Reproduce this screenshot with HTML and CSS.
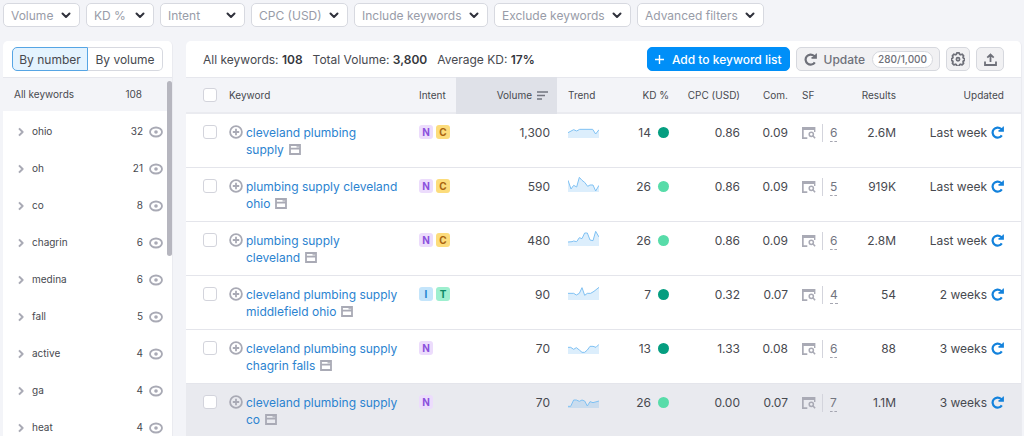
FILE: index.html
```html
<!DOCTYPE html>
<html lang="en">
<head>
<meta charset="utf-8">
<meta name="viewport" content="width=device-width, initial-scale=1">
<title>Keyword overview</title>
<link rel="stylesheet" href="styles.css">
</head>
<body>
<svg class="sprite" aria-hidden="true">
  <symbol id="chevron-down" viewBox="0 0 10 7"><path d="M1.5 1.5 5 5 8.5 1.5" fill="none" stroke="currentColor" stroke-width="2" stroke-linecap="round" stroke-linejoin="round"/></symbol>
  <symbol id="chevron-right" viewBox="0 0 6 10"><path d="M1 1.4 4.600 5 1 8.600" fill="none" stroke="currentColor" stroke-width="2" stroke-linejoin="round"/></symbol>
  <symbol id="eye" viewBox="0 0 14 12"><ellipse cx="7" cy="6" rx="6" ry="4.5" fill="none" stroke="currentColor" stroke-width="1.8"/><circle cx="7" cy="6" r="1.8" fill="currentColor"/></symbol>
  <symbol id="plus-circle" viewBox="0 0 14 14"><circle cx="7" cy="7" r="5.9" fill="none" stroke="currentColor" stroke-width="1.8"/><path d="M7 3.8v6.4M3.8 7h6.4" stroke="currentColor" stroke-width="1.8"/></symbol>
  <symbol id="page" viewBox="0 0 12 11"><path d="M1 1h10v9H1zM1 4.700h10" fill="none" stroke="currentColor" stroke-width="1.8"/><path d="M7.500 2.800h2.500" stroke="currentColor" stroke-width="1.200"/></symbol>
  <symbol id="serp" viewBox="0 0 14 12"><path d="M0 0h13.400v5H12V3H1.700v7.300h3.600V12H0z" fill="currentColor"/><circle cx="9.300" cy="7.300" r="2.100" fill="none" stroke="currentColor" stroke-width="1.500"/><path d="m10.800 8.800 2.300 2.400" stroke="currentColor" stroke-width="1.600"/></symbol>
  <symbol id="refresh" viewBox="0 0 13 13"><path d="M10.800 9.300A5 5 0 1 1 10 2.900L11 4" fill="none" stroke="currentColor" stroke-width="2.200"/><path d="M12.900.4v5.400H7.500V4.100h2.200L12 .4z" fill="currentColor"/></symbol>
</svg>

<form class="filters">
  <label class="filter filter-volume"><select aria-label="Volume"><option>Volume</option></select><svg class="chevron"><use href="#chevron-down"/></svg></label>
  <label class="filter filter-kd"><select aria-label="KD %"><option>KD %</option></select><svg class="chevron"><use href="#chevron-down"/></svg></label>
  <label class="filter filter-intent"><select aria-label="Intent"><option>Intent</option></select><svg class="chevron"><use href="#chevron-down"/></svg></label>
  <label class="filter filter-cpc"><select aria-label="CPC (USD)"><option>CPC (USD)</option></select><svg class="chevron"><use href="#chevron-down"/></svg></label>
  <label class="filter filter-include"><select aria-label="Include keywords"><option>Include keywords</option></select><svg class="chevron"><use href="#chevron-down"/></svg></label>
  <label class="filter filter-exclude"><select aria-label="Exclude keywords"><option>Exclude keywords</option></select><svg class="chevron"><use href="#chevron-down"/></svg></label>
  <label class="filter filter-advanced"><select aria-label="Advanced filters"><option>Advanced filters</option></select><svg class="chevron"><use href="#chevron-down"/></svg></label>
</form>

<div class="layout">
  <aside class="sidebar">
    <div class="tabs">
      <button type="button" class="tab tab-active" aria-pressed="true">By number</button>
      <button type="button" class="tab" aria-pressed="false">By volume</button>
    </div>
    <div class="groups">
      <div class="groups-head"><span>All keywords</span><span class="group-count">108</span></div>
      <ul class="group-list">
        <li class="group"><svg class="arrow"><use href="#chevron-right"/></svg><span>ohio</span><span class="group-count">32</span><button type="button" class="icon-button" aria-label="Hide ohio"><svg class="eye"><use href="#eye"/></svg></button></li>
        <li class="group"><svg class="arrow"><use href="#chevron-right"/></svg><span>oh</span><span class="group-count">21</span><button type="button" class="icon-button" aria-label="Hide oh"><svg class="eye"><use href="#eye"/></svg></button></li>
        <li class="group"><svg class="arrow"><use href="#chevron-right"/></svg><span>co</span><span class="group-count">8</span><button type="button" class="icon-button" aria-label="Hide co"><svg class="eye"><use href="#eye"/></svg></button></li>
        <li class="group"><svg class="arrow"><use href="#chevron-right"/></svg><span>chagrin</span><span class="group-count">6</span><button type="button" class="icon-button" aria-label="Hide chagrin"><svg class="eye"><use href="#eye"/></svg></button></li>
        <li class="group"><svg class="arrow"><use href="#chevron-right"/></svg><span>medina</span><span class="group-count">6</span><button type="button" class="icon-button" aria-label="Hide medina"><svg class="eye"><use href="#eye"/></svg></button></li>
        <li class="group"><svg class="arrow"><use href="#chevron-right"/></svg><span>fall</span><span class="group-count">5</span><button type="button" class="icon-button" aria-label="Hide fall"><svg class="eye"><use href="#eye"/></svg></button></li>
        <li class="group"><svg class="arrow"><use href="#chevron-right"/></svg><span>active</span><span class="group-count">4</span><button type="button" class="icon-button" aria-label="Hide active"><svg class="eye"><use href="#eye"/></svg></button></li>
        <li class="group"><svg class="arrow"><use href="#chevron-right"/></svg><span>ga</span><span class="group-count">4</span><button type="button" class="icon-button" aria-label="Hide ga"><svg class="eye"><use href="#eye"/></svg></button></li>
        <li class="group"><svg class="arrow"><use href="#chevron-right"/></svg><span>heat</span><span class="group-count">4</span><button type="button" class="icon-button" aria-label="Hide heat"><svg class="eye"><use href="#eye"/></svg></button></li>
      </ul>
      <div class="scroll-thumb"></div>
    </div>
  </aside>

  <main class="panel">
    <div class="toolbar">
      <span>All keywords: <b>108</b></span>
      <span>Total Volume: <b>3,800</b></span>
      <span>Average KD: <b>17%</b></span>
      <div class="actions">
        <button type="button" class="button button-primary"><svg class="plus" viewBox="0 0 9 9"><path d="M4.5 0v9M0 4.5h9" stroke="currentColor" stroke-width="1.4"/></svg>Add to keyword list</button>
        <button type="button" class="button button-update"><svg class="refresh"><use href="#refresh"/></svg>Update<span class="quota">280/1,000</span></button>
        <button type="button" class="button button-gear" aria-label="Settings"><svg class="gear" viewBox="0 0 14 14" fill="none" stroke="currentColor"><path d="M5.8.9h2.4l.5 1.5 1 .4 1.4-.6 1.5 1.6-.6 1.4.4 1 1.3.4v1.8l-1.3.5-.4 1 .6 1.4-1.5 1.6-1.4-.7-1 .4-.5 1.4H5.800l-.5-1.400-1-.4-1.400.7-1.500-1.600.6-1.400-.4-1L.3 8.400V6.600l1.300-.4.400-1-.6-1.400 1.500-1.600 1.400.6 1-.4z" stroke-width="1.700" stroke-linejoin="round"/><circle cx="7" cy="7.200" r="1.600" stroke-width="1.700"/></svg></button>
        <button type="button" class="button button-export" aria-label="Export"><svg class="export" viewBox="0 0 13 13" fill="none" stroke="currentColor" stroke-width="1.800"><path d="M6.500 9V1.600M3.300 4.600l3.200-3.200 3.200 3.200M1 8.500V12h11V8.500"/></svg></button>
      </div>
    </div>

    <table class="keywords">
      <colgroup>
        <col class="col-check"><col><col class="col-intent"><col class="col-volume"><col class="col-trend"><col class="col-kd"><col class="col-cpc"><col class="col-com"><col class="col-sf"><col class="col-results"><col class="col-updated">
      </colgroup>
      <thead>
        <tr>
          <th class="check"><input type="checkbox" aria-label="Select all"></th>
          <th>Keyword</th>
          <th>Intent</th>
          <th class="num volume sorted"><span class="sort">Volume<svg class="sort-icon" viewBox="0 0 11 9"><path d="M0 1h11M0 4.500h8M0 8h5" stroke="currentColor" stroke-width="1.500"/></svg></span></th>
          <th class="trend">Trend</th>
          <th class="num">KD %</th>
          <th class="num">CPC (USD)</th>
          <th class="num">Com.</th>
          <th class="sf">SF</th>
          <th class="num">Results</th>
          <th class="num updated">Updated</th>
        </tr>
      </thead>
      <tbody>
        <tr>
          <td class="check"><input type="checkbox" aria-label="Select cleveland plumbing supply"></td>
          <td><div class="keyword"><svg class="add"><use href="#plus-circle"/></svg><span><a href="#">cleveland plumbing</a> <span class="tail"><a href="#">supply</a><svg class="page"><use href="#page"/></svg></span></span></div></td>
          <td><div class="intents"><span class="intent intent-n">N</span><span class="intent intent-c">C</span></div></td>
          <td class="num volume">1,300</td>
          <td class="trend"><svg class="spark" viewBox="0 0 93 48"><path class="area" d="M0 32 17 23 26 27 35 22H74L83 36 93 23V48H0z"/><path class="line" d="M0 32 17 23 26 27 35 22H74L83 36 93 23"/></svg></td>
          <td><div class="kd">14<i class="dot dot-easy"></i></div></td>
          <td class="num">0.86</td><td class="num">0.09</td>
          <td class="sf"><div class="serp"><svg class="serp-icon"><use href="#serp"/></svg><span class="serp-count"><span>6</span></span></div></td>
          <td class="num">2.6M</td>
          <td class="updated"><div class="fresh">Last week<button type="button" class="icon-button" aria-label="Refresh"><svg class="refresh"><use href="#refresh"/></svg></button></div></td>
        </tr>
        <tr>
          <td class="check"><input type="checkbox" aria-label="Select plumbing supply cleveland ohio"></td>
          <td><div class="keyword"><svg class="add"><use href="#plus-circle"/></svg><span><a href="#">plumbing supply cleveland</a> <span class="tail"><a href="#">ohio</a><svg class="page"><use href="#page"/></svg></span></span></div></td>
          <td><div class="intents"><span class="intent intent-n">N</span><span class="intent intent-c">C</span></div></td>
          <td class="num volume">590</td>
          <td class="trend"><svg class="spark" viewBox="0 0 93 48"><path class="area" d="M0 13 9 39 17 28 26 33 34 4 42 13 50 19 59 31 66 27H75L83 45 93 28V48H0z"/><path class="line" d="M0 13 9 39 17 28 26 33 34 4 42 13 50 19 59 31 66 27H75L83 45 93 28"/></svg></td>
          <td><div class="kd">26<i class="dot dot-fair"></i></div></td>
          <td class="num">0.86</td><td class="num">0.09</td>
          <td class="sf"><div class="serp"><svg class="serp-icon"><use href="#serp"/></svg><span class="serp-count"><span>5</span></span></div></td>
          <td class="num">919K</td>
          <td class="updated"><div class="fresh">Last week<button type="button" class="icon-button" aria-label="Refresh"><svg class="refresh"><use href="#refresh"/></svg></button></div></td>
        </tr>
        <tr>
          <td class="check"><input type="checkbox" aria-label="Select plumbing supply cleveland"></td>
          <td><div class="keyword"><svg class="add"><use href="#plus-circle"/></svg><span><a href="#">plumbing supply</a> <span class="tail"><a href="#">cleveland</a><svg class="page"><use href="#page"/></svg></span></span></div></td>
          <td><div class="intents"><span class="intent intent-n">N</span><span class="intent intent-c">C</span></div></td>
          <td class="num volume">480</td>
          <td class="trend"><svg class="spark" viewBox="0 0 93 48"><path class="area" d="M0 36 12 35 17 33 26 35 34 23 42 26 50 9H58L66 30 75 32 83 4 93 21V48H0z"/><path class="line" d="M0 36 12 35 17 33 26 35 34 23 42 26 50 9H58L66 30 75 32 83 4 93 21"/></svg></td>
          <td><div class="kd">26<i class="dot dot-fair"></i></div></td>
          <td class="num">0.86</td><td class="num">0.09</td>
          <td class="sf"><div class="serp"><svg class="serp-icon"><use href="#serp"/></svg><span class="serp-count"><span>6</span></span></div></td>
          <td class="num">2.8M</td>
          <td class="updated"><div class="fresh">Last week<button type="button" class="icon-button" aria-label="Refresh"><svg class="refresh"><use href="#refresh"/></svg></button></div></td>
        </tr>
        <tr>
          <td class="check"><input type="checkbox" aria-label="Select cleveland plumbing supply middlefield ohio"></td>
          <td><div class="keyword"><svg class="add"><use href="#plus-circle"/></svg><span><a href="#">cleveland plumbing supply middlefield ohio</a><svg class="page"><use href="#page"/></svg></span></div></td>
          <td><div class="intents"><span class="intent intent-i">I</span><span class="intent intent-t">T</span></div></td>
          <td class="num volume">90</td>
          <td class="trend"><svg class="spark" viewBox="0 0 93 48"><path class="area" d="M0 28H17L25 33 34 28 42 11 50 34 58 28H68L78 22 93 10V48H0z"/><path class="line" d="M0 28H17L25 33 34 28 42 11 50 34 58 28H68L78 22 93 10"/></svg></td>
          <td><div class="kd">7<i class="dot dot-easy"></i></div></td>
          <td class="num">0.32</td><td class="num">0.07</td>
          <td class="sf"><div class="serp"><svg class="serp-icon"><use href="#serp"/></svg><span class="serp-count"><span>4</span></span></div></td>
          <td class="num">54</td>
          <td class="updated"><div class="fresh">2 weeks<button type="button" class="icon-button" aria-label="Refresh"><svg class="refresh"><use href="#refresh"/></svg></button></div></td>
        </tr>
        <tr>
          <td class="check"><input type="checkbox" aria-label="Select cleveland plumbing supply chagrin falls"></td>
          <td><div class="keyword"><svg class="add"><use href="#plus-circle"/></svg><span><a href="#">cleveland plumbing supply chagrin falls</a><svg class="page"><use href="#page"/></svg></span></div></td>
          <td><div class="intents"><span class="intent intent-n">N</span></div></td>
          <td class="num volume">70</td>
          <td class="trend"><svg class="spark" viewBox="0 0 93 48"><path class="area" d="M0 28H8L17 34 25 29 34 36 42 43H50L58 36 66 25H75L84 28 93 19V48H0z"/><path class="line" d="M0 28H8L17 34 25 29 34 36 42 43H50L58 36 66 25H75L84 28 93 19"/></svg></td>
          <td><div class="kd">13<i class="dot dot-easy"></i></div></td>
          <td class="num">1.33</td><td class="num">0.08</td>
          <td class="sf"><div class="serp"><svg class="serp-icon"><use href="#serp"/></svg><span class="serp-count"><span>6</span></span></div></td>
          <td class="num">88</td>
          <td class="updated"><div class="fresh">3 weeks<button type="button" class="icon-button" aria-label="Refresh"><svg class="refresh"><use href="#refresh"/></svg></button></div></td>
        </tr>
        <tr class="row-hover">
          <td class="check"><input type="checkbox" aria-label="Select cleveland plumbing supply co"></td>
          <td><div class="keyword"><svg class="add"><use href="#plus-circle"/></svg><span><a href="#">cleveland plumbing supply</a> <span class="tail"><a href="#">co</a><svg class="page"><use href="#page"/></svg></span></span></div></td>
          <td><div class="intents"><span class="intent intent-n">N</span></div></td>
          <td class="num volume">70</td>
          <td class="trend"><svg class="spark" viewBox="0 0 93 48"><path class="area" d="M0 43H8L17 24H25L34 28 42 24 50 27 58 42 66 29 75 32 93 27V48H0z"/><path class="line" d="M0 43H8L17 24H25L34 28 42 24 50 27 58 42 66 29 75 32 93 27"/></svg></td>
          <td><div class="kd">26<i class="dot dot-fair"></i></div></td>
          <td class="num">0.00</td><td class="num">0.07</td>
          <td class="sf"><div class="serp"><svg class="serp-icon"><use href="#serp"/></svg><span class="serp-count"><span>7</span></span></div></td>
          <td class="num">1.1M</td>
          <td class="updated"><div class="fresh">3 weeks<button type="button" class="icon-button" aria-label="Refresh"><svg class="refresh"><use href="#refresh"/></svg></button></div></td>
        </tr>
      </tbody>
    </table>
  </main>
</div>
</body>
</html>
```
FILE: styles.css
```css
* { box-sizing: border-box; }

html { height: 100%; }

body {
  display: flex;
  flex-direction: column;
  gap: 14px;
  height: 100%;
  margin: 0;
  padding: 3px 2px 0 3px;
  overflow: hidden;
  background: #f3f4f8;
  color: #47494f;
  font: 12px/17px Inter, "Liberation Sans", sans-serif;
}

button, input, select { font: inherit; color: inherit; }
button { cursor: pointer; }
svg { display: block; flex: none; }
.sprite { position: absolute; width: 0; height: 0; }

/* Filters */
.filters { display: flex; gap: 6px; }
.filter {
  display: grid;
  height: 24px;
  border: 1px solid #d7d9e0;
  border-radius: 5px;
  background: #fff;
}
.filter select {
  grid-area: 1 / 1;
  width: 100%;
  padding: 0 22px 0 7px;
  border: 0;
  appearance: none;
  background: transparent;
  color: #989ca8;
}
.chevron {
  grid-area: 1 / 1;
  place-self: center end;
  width: 10px;
  height: 7px;
  margin-right: 8px;
  color: #2f313b;
  pointer-events: none;
}
.filter-volume { width: 77px; }
.filter-kd { width: 68px; }
.filter-intent { width: 85px; }
.filter-cpc { width: 97px; }
.filter-include { width: 134px; }
.filter-exclude { width: 137px; }
.filter-advanced { width: 127px; }

.layout {
  display: grid;
  grid-template-columns: 170px minmax(0, 1fr);
  gap: 13px;
  flex: 1;
  min-height: 0;
}

/* Sidebar */
.sidebar {
  overflow: hidden;
  border-right: 1px solid #eaebf0;
  border-radius: 5px 5px 0 0;
  background: #fff;
}
.tabs { display: flex; padding: 6px 9px; }
.tab {
  flex: 1;
  height: 24px;
  padding: 0;
  border: 1px solid #d7d9e0;
  border-left: 0;
  border-radius: 0 5px 5px 0;
  background: #fff;
  white-space: nowrap;
}
.tab-active {
  border: 1px solid #56a5e4;
  border-radius: 5px 0 0 5px;
  background: #e4f3fe;
}
.groups { position: relative; font-size: 10px; }
.groups-head {
  display: flex;
  align-items: center;
  height: 34px;
  padding: 0 30px 0 11px;
  border-top: 1px solid #e6e7ed;
  background: #f3f4f8;
}
.group-count { margin-left: auto; }
.group-list { margin: 0; padding: 2px 0 0; list-style: none; }
.group {
  display: flex;
  align-items: center;
  height: 37px;
  padding: 0 9px 0 15px;
}
.arrow { width: 6px; height: 10px; margin-right: 8px; color: #a9aab5; }
.icon-button { padding: 0; border: 0; background: none; }
.group .icon-button { margin-left: 6px; color: #a9aab5; }
.eye { width: 14px; height: 12px; }
.scroll-thumb {
  position: absolute;
  top: 4px;
  right: 0;
  width: 5px;
  height: 175px;
  border-radius: 3px;
  background: #b6b6bf;
}

/* Main panel */
.panel {
  overflow: hidden;
  border-right: 1px solid #eaebf0;
  border-radius: 5px 5px 0 0;
  background: #fff;
}
.toolbar {
  display: flex;
  align-items: center;
  gap: 10px;
  padding: 6px 17px;
  white-space: nowrap;
}
.toolbar b { font-weight: 600; color: #35373d; }
.actions { display: flex; gap: 6px; margin-left: auto; }
.button {
  display: flex;
  align-items: center;
  justify-content: center;
  height: 24px;
  padding: 0 7px;
  border: 1px solid #d6d8de;
  border-radius: 5px;
  background: #f1f1f3;
  color: #6e7079;
  font-weight: 500;
}
.button-primary {
  gap: 8px;
  border-color: #008ff8;
  background: #008ff8;
  color: #fff;
}
.plus { width: 9px; height: 9px; }
.refresh { width: 13px; height: 13px; }
.button-update { gap: 7px; padding: 0 6px 0 7px; }
.quota {
  padding: 0 5px;
  border: 1px solid #d6d8de;
  border-radius: 9px;
  background: #fff;
  font-size: 10px;
  line-height: 15px;
}
.button-gear { width: 24px; padding: 0; }
.button-export { width: 28px; padding: 0; }
.gear { width: 14px; height: 14px; }
.export { width: 13px; height: 13px; }

/* Table */
.keywords {
  width: 100%;
  border-collapse: separate;
  border-spacing: 0;
  table-layout: fixed;
  white-space: nowrap;
}
.col-check { width: 43px; }
.col-intent { width: 37px; }
.col-volume { width: 101px; }
.col-trend { width: 53px; }
.col-kd { width: 59px; }
.col-cpc { width: 71px; }
.col-com { width: 48px; }
.col-sf { width: 62px; }
.col-results { width: 46px; }
.col-updated { width: 125px; }

.keywords th {
  height: 37px;
  padding: 0;
  border-top: 1px solid #e6e7ed;
  border-bottom: 2px solid #eaebf0;
  background: #f3f4f8;
  font-size: 10px;
  font-weight: 400;
  text-align: left;
}
.keywords td {
  height: 54px;
  padding: 10px 0 0;
  border-bottom: 1px solid #e4e5eb;
  vertical-align: top;
}
.keywords .num { text-align: right; }
.keywords .check { padding-left: 17px; }
.keywords .volume { padding-right: 7px; }
.keywords .sorted { padding-right: 9px; border-color: #dfe1e8; background: #dfe1e8; }
.keywords .trend { padding-left: 11px; }
.keywords td.trend { padding-top: 8px; }
.keywords .sf { padding-left: 14px; }
.keywords .updated { padding-right: 17px; }
.row-hover td { background: #e9eaef; }

.check input {
  display: block;
  width: 14px;
  height: 14px;
  margin: 1px 0;
  border: 1px solid #d3d4dc;
  border-radius: 3px;
  appearance: none;
  background: #fff;
}
.sort { display: flex; align-items: center; justify-content: flex-end; gap: 5px; }
.sort-icon { width: 11px; height: 9px; color: #73757f; }

.keyword { display: flex; gap: 3px; padding-right: 16px; white-space: normal; }
.keyword a { color: #2b83d0; text-decoration: none; }
.add { width: 14px; height: 14px; margin-top: 1px; color: #a9aab5; }
.tail { white-space: nowrap; }
.page {
  display: inline-block;
  width: 12px;
  height: 11px;
  margin-left: 5px;
  color: #a9aab5;
  vertical-align: -1px;
}

.intents { display: flex; gap: 3px; padding-top: 1px; }
.intent {
  width: 14px;
  height: 14px;
  border-radius: 3px;
  font-size: 10px;
  font-weight: 700;
  line-height: 14px;
  text-align: center;
}
.intent-n { background: #ecdcfc; color: #8b50dc; }
.intent-c { background: #fcdc7c; color: #a86510; }
.intent-i { background: #c4e5fb; color: #2183d0; }
.intent-t { background: #9eefcf; color: #0d8965; }

.spark { width: 31px; height: 16px; }
.area { fill: #2e9bf0; fill-opacity: .17; }
.line { fill: none; stroke: #7fc1f3; stroke-width: 3; }

.kd { display: flex; align-items: center; justify-content: flex-end; gap: 7px; }
.dot { width: 11px; height: 11px; border-radius: 50%; }
.dot-easy { background: #059e80; }
.dot-fair { background: #58dca9; }

.serp { display: flex; align-items: center; }
.serp-icon { width: 14px; height: 12px; color: #a9aab5; }
.serp-count {
  margin-left: 6px;
  padding-left: 7px;
  border-left: 1px solid #d3d4dc;
  color: #73757f;
}
.serp-count span { display: block; border-bottom: 1px dashed #a5a6b1; }

.fresh { display: flex; align-items: center; justify-content: flex-end; gap: 4px; }
.fresh .icon-button { color: #1382dc; }
```
